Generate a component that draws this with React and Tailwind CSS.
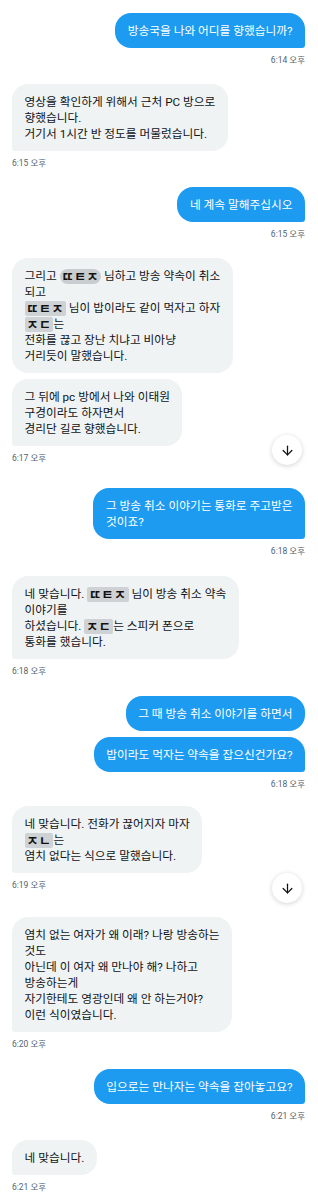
import React from 'react';
import { ArrowDown } from 'lucide-react';

const Mask = ({ children, oval }) => (
  <span
    className={`inline-block font-bold text-[13px] tracking-[0.5px] text-[#111] leading-[15px] px-[2px] align-[-1px] ${
      oval ? 'bg-[#c9cdd0] rounded-full' : 'bg-[#cfd2d4] rounded-[2px]'
    }`}
  >
    {children}
  </span>
);

// 대화 목록 (gap = 위 타임스탬프와의 간격)
const groups = [
  { side: 'me', gap: 13, time: '6:14 오후', bubbles: [['방송국을 나와 어디를 향했습니까?']] },
  {
    side: 'them',
    gap: 19,
    time: '6:15 오후',
    bubbles: [['영상을 확인하게 위해서 근처 PC 방으로', '향했습니다.', '거기서 1시간 반 정도를 머물렀습니다.']]
  },
  { side: 'me', gap: 19, time: '6:15 오후', bubbles: [['네 계속 말해주십시오']] },
  {
    side: 'them',
    gap: 19,
    time: '6:17 오후',
    bubbles: [
      [
        <>그리고 <Mask oval>ㄸㅌㅈ</Mask> 님하고 방송 약속이 취소</>,
        '되고',
        <><Mask>ㄸㅌㅈ</Mask> 님이 밥이라도 같이 먹자고 하자</>,
        <><Mask>ㅈㄷ</Mask>는</>,
        '전화를 끊고 장난 치냐고 비아냥',
        '거리듯이 말했습니다.'
      ],
      ['그 뒤에 pc 방에서 나와 이태원', '구경이라도 하자면서', '경리단 길로 향했습니다.']
    ]
  },
  { side: 'me', gap: 25, time: '6:18 오후', bubbles: [['그 방송 취소 이야기는 통화로 주고받은', '것이죠?']] },
  {
    side: 'them',
    gap: 20,
    time: '6:18 오후',
    bubbles: [
      [
        <>네 맞습니다. <Mask>ㄸㅌㅈ</Mask> 님이 방송 취소 약속</>,
        '이야기를',
        <>하셨습니다. <Mask>ㅈㄷ</Mask>는 스피커 폰으로</>,
        '통화를 했습니다.'
      ]
    ]
  },
  {
    side: 'me',
    gap: 20,
    time: '6:18 오후',
    bubbles: [['그 때 방송 취소 이야기를 하면서'], ['밥이라도 먹자는 약속을 잡으신건가요?']]
  },
  {
    side: 'them',
    gap: 17,
    time: '6:19 오후',
    bubbles: [['네 맞습니다. 전화가 끊어지자 마자', <><Mask>ㅈㄴ</Mask>는</>, '염치 없다는 식으로 말했습니다.']]
  },
  {
    side: 'them',
    gap: 27,
    time: '6:20 오후',
    bubbles: [
      [
        '염치 없는 여자가 왜 이래? 나랑 방송하는',
        '것도',
        '아닌데 이 여자 왜 만나야 해? 나하고',
        '방송하는게',
        '자기한테도 영광인데 왜 안 하는거야?',
        '이런 식이였습니다.'
      ]
    ]
  },
  { side: 'me', gap: 20, time: '6:21 오후', bubbles: [['입으로는 만나자는 약속을 잡아놓고요?']] },
  { side: 'them', gap: 19, time: '6:21 오후', bubbles: [['네 맞습니다.']] }
];

const Bubble = ({ lines, mine, last }) => (
  <div
    className={`px-[12.5px] py-[9.5px] text-[11.7px] whitespace-nowrap rounded-[16px] ${
      mine ? 'bg-[#1d9bf0] text-white' : 'bg-[#eff3f4] text-[#0f1419]'
    } ${last ? (mine ? 'rounded-br-[3px]' : 'rounded-bl-[3px]') : ''}`}
  >
    {lines.map((l, i) => (
      <div key={i} className="h-[16px] leading-[16px]">
        {l}
      </div>
    ))}
  </div>
);

const ScrollDown = ({ top }) => (
  <button
    className="absolute left-[272px] w-[30px] h-[30px] rounded-full bg-white flex items-center justify-center shadow-[0_1px_5px_rgba(0,0,0,0.18)]"
    style={{ top }}
  >
    <ArrowDown size={15} strokeWidth={2} color="#0f1419" />
  </button>
);

export default function App() {
  return (
    <div
      className="relative w-[318px] h-[1200px] overflow-hidden bg-white pl-[12px] pr-[13px]"
      style={{ fontFamily: 'Roboto, "Noto Sans CJK KR", sans-serif' }}
    >
      {groups.map((g, gi) => {
        const mine = g.side === 'me';
        return (
          <div key={gi} className={`flex flex-col ${mine ? 'items-end' : 'items-start'}`} style={{ marginTop: g.gap }}>
            <div className={`flex flex-col gap-[6px] ${mine ? 'items-end' : 'items-start'}`}>
              {g.bubbles.map((b, bi) => (
                <Bubble key={bi} lines={b} mine={mine} last={bi === g.bubbles.length - 1} />
              ))}
            </div>
            <div className="mt-[7px] h-[10px] text-[8.5px] leading-[10px] text-[#536471]">{g.time}</div>
          </div>
        );
      })}
      <ScrollDown top={435} />
      <ScrollDown top={873} />
    </div>
  );
}
